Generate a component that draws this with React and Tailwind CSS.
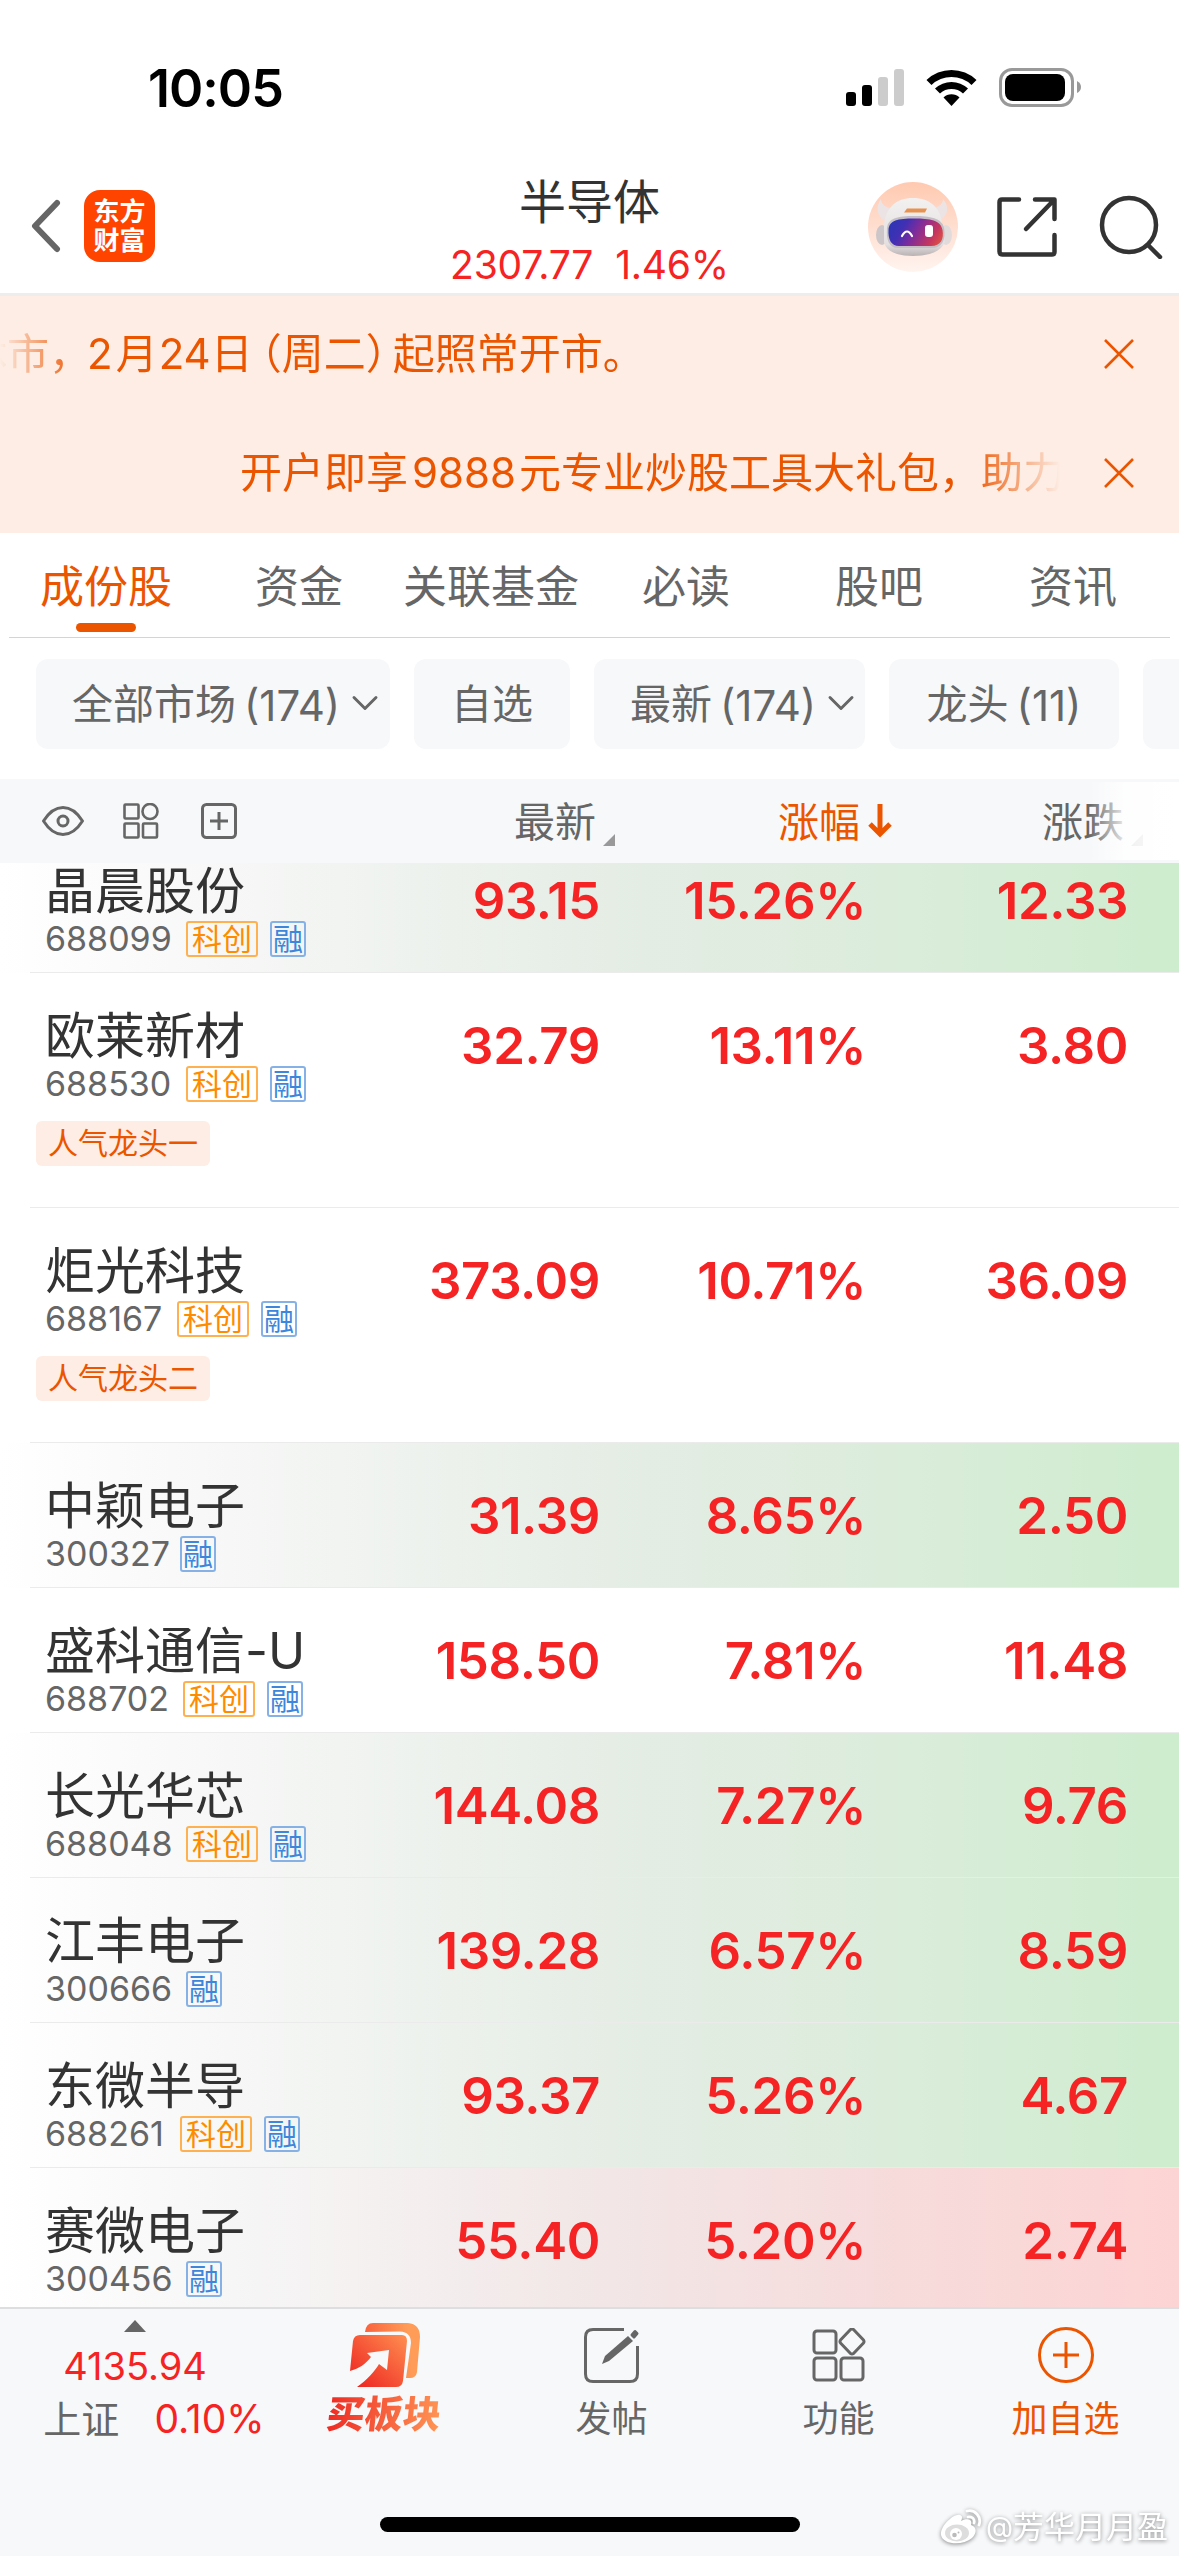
import { ChevronDown } from 'lucide-react'

const tabs = [
  { label: '成份股', space: 'ml-[40px]', active: true },
  { label: '资金', space: 'ml-[83px]' },
  { label: '关联基金', space: 'ml-[60px]' },
  { label: '必读', space: 'ml-[63px]' },
  { label: '股吧', space: 'ml-[105px]' },
  { label: '资讯', space: 'ml-[106px]' },
]

const chips = [
  { label: '全部市场', count: '(174)', arrow: true, width: 'w-[354px]' },
  { label: '自选', width: 'w-[156px]' },
  { label: '最新', count: '(174)', arrow: true, width: 'w-[271px]' },
  { label: '龙头', count: '(11)', width: 'w-[230px]' },
  { label: '', width: 'w-[60px]' },
]

const stocks = [
  { name: '晶晨股份', code: '688099', kc: true, price: '93.15', pct: '15.26%', diff: '12.33', tone: 'green', codeWidth: 'w-[141px]' },
  { name: '欧莱新材', code: '688530', kc: true, price: '32.79', pct: '13.11%', diff: '3.80', tag: '人气龙头一', codeWidth: 'w-[141px]' },
  { name: '炬光科技', code: '688167', kc: true, price: '373.09', pct: '10.71%', diff: '36.09', tag: '人气龙头二', codeWidth: 'w-[132px]' },
  { name: '中颖电子', code: '300327', price: '31.39', pct: '8.65%', diff: '2.50', tone: 'green', codeWidth: 'w-[135px]' },
  { name: '盛科通信-U', code: '688702', kc: true, price: '158.50', pct: '7.81%', diff: '11.48', codeWidth: 'w-[138px]' },
  { name: '长光华芯', code: '688048', kc: true, price: '144.08', pct: '7.27%', diff: '9.76', tone: 'green', codeWidth: 'w-[141px]' },
  { name: '江丰电子', code: '300666', price: '139.28', pct: '6.57%', diff: '8.59', tone: 'green', codeWidth: 'w-[141px]' },
  { name: '东微半导', code: '688261', kc: true, price: '93.37', pct: '5.26%', diff: '4.67', tone: 'green', codeWidth: 'w-[135px]' },
  { name: '赛微电子', code: '300456', price: '55.40', pct: '5.20%', diff: '2.74', tone: 'red', codeWidth: 'w-[141px]' },
]

const rowTones = {
  green: 'bg-[linear-gradient(90deg,#ffffff_0%,#f5f6f5_22%,#e5ede5_52%,#dcecdc_74%,#ceecce_100%)]',
  red: 'bg-[linear-gradient(90deg,#ffffff_0%,#f6f5f5_22%,#f2e6e6_52%,#f7dbdb_76%,#fdd4d4_100%)]',
}

const StatusBar = () => (
  <div className="flex h-[150px] items-start justify-between pt-[62px] pl-[148px] pr-[97px]">
    <div className="text-[52px] leading-[53px] font-semibold tracking-[-1px] text-black">10:05</div>
    <div className="flex items-center pt-[5px]">
      <svg width="58" height="40" viewBox="0 0 58 40">
        <rect x="0" y="25" width="10" height="14" rx="3" />
        <rect x="16" y="18" width="10" height="21" rx="3" />
        <rect x="32" y="10" width="10" height="29" rx="3" fill="#ccc" />
        <rect x="48" y="2" width="10" height="37" rx="3" fill="#ccc" />
      </svg>
      <svg className="ml-[22px]" width="51" height="40" viewBox="0 0 51 40">
        <path d="M0.5 13 A36 36 0 0 1 50.5 13 L45.5 18 A29 29 0 0 0 5.5 18 Z" />
        <path d="M9 21.5 A24 24 0 0 1 42 21.5 L37 26.5 A17 17 0 0 0 14 26.5 Z" />
        <path d="M17.5 30.5 A11.5 11.5 0 0 1 33.5 30.5 L25.5 39 Z" />
      </svg>
      <svg className="ml-[22px]" width="83" height="40" viewBox="0 0 83 40">
        <rect x="1.5" y="2.5" width="72" height="36" rx="11.5" fill="none" stroke="#999" strokeWidth="3" />
        <rect x="6" y="7" width="60" height="27" rx="8" />
        <path d="M78 14 Q82 16 82 20 Q82 24 78 26 Z" fill="#999" />
      </svg>
    </div>
  </div>
)

const Robot = () => (
  <svg width="90" height="90" viewBox="0 0 90 90">
    <defs>
      <linearGradient id="robotBg" x1="0" y1="0" x2="0" y2="1">
        <stop offset="0" stopColor="#ffc9b0" />
        <stop offset="1" stopColor="#fff4f0" />
      </linearGradient>
      <linearGradient id="visor" x1="0" y1="0.3" x2="1" y2="0.6">
        <stop offset="0" stopColor="#2d35b4" />
        <stop offset="0.25" stopColor="#4030b4" />
        <stop offset="0.5" stopColor="#7d2c9c" />
        <stop offset="0.85" stopColor="#c5365f" />
        <stop offset="1" stopColor="#d94a4a" />
      </linearGradient>
      <linearGradient id="helmet" x1="0" y1="0" x2="0" y2="1">
        <stop offset="0" stopColor="#f3f0f0" />
        <stop offset="0.8" stopColor="#e4e0e1" />
        <stop offset="1" stopColor="#b9b2b4" />
      </linearGradient>
    </defs>
    <circle cx="45" cy="45" r="45" fill="url(#robotBg)" />
    <path d="M13 17 C8 24 8 33 16 38 L24 27 C17 25 13 22 13 17Z" fill="#ece4e4" />
    <path d="M75 17 C81 24 81 33 72 38 L64 27 C71 25 75 22 75 17Z" fill="#ece4e4" />
    <ellipse cx="14" cy="53" rx="6" ry="10" fill="#cdc6c8" />
    <ellipse cx="78" cy="53" rx="6" ry="10" fill="#e2dbdc" />
    <path d="M16 44 C17 26 28 16 45 16 C62 16 73 26 74 42 L77 60 C73 69 62 74 45 74 C28 74 19 69 16 61 Z" fill="url(#helmet)" />
    <path d="M19 46 C20 36 30 34 46 34 C62 34 74 36 76 46 C78 58 74 66 64 66 H30 C21 66 18 58 19 46 Z" fill="#c5bfc3" />
    <path d="M20.5 48 C21 38 30 36.5 46 36.5 C62 36.5 73 38 74.5 48 C76 57 73 64 63 64 H31 C23 64 20 57 20.5 48 Z" fill="url(#visor)" />
    <path d="M36 30.5 h21 l2 -4 h-20 Z" fill="#e8924f" />
    <path d="M34 54 Q39 45 44 54" fill="none" stroke="#fff" strokeWidth="2.2" strokeLinecap="round" />
    <rect x="57" y="43" width="8" height="12" rx="3" fill="#fff" />
  </svg>
)

const NavBar = () => (
  <div className="grid h-[146px] grid-cols-[1fr_300px_1fr] border-b-[3px] border-[#ededed]">
    <div className="flex items-center pt-[9px] pl-[31px]">
      <svg width="30" height="54" viewBox="0 0 30 54" fill="none" stroke="#666" strokeWidth="6" strokeLinecap="round" strokeLinejoin="round">
        <path d="M26 4 L4 27 L26 50" />
      </svg>
      <div className="ml-[23px] flex h-[72px] w-[71px] flex-col items-center justify-center rounded-[16px] bg-[#ff4400] text-[26px] leading-[29px] font-bold text-white">
        <div>东方</div>
        <div>财富</div>
      </div>
    </div>
    <div className="pt-[28px] text-center whitespace-nowrap">
      <div className="text-[47px] leading-[48px] text-[#333]">半导体</div>
      <div className="mt-[19px] text-[39px] leading-[40px] tracking-[-0.2px] text-[#f52323]">
        2307.77<span className="ml-[22px]">1.46%</span>
      </div>
    </div>
    <div className="flex items-center justify-end pt-[10px] pr-[16px]">
      <Robot />
      <svg className="ml-[38px]" width="62" height="62" viewBox="0 0 62 62" fill="none" stroke="#333" strokeWidth="4.5" strokeLinecap="round" strokeLinejoin="round">
        <path d="M23 3.5 H6 Q3.5 3.5 3.5 6 V55.5 Q3.5 58.5 6.5 58.5 H56 Q58.5 58.5 58.5 56 V39" />
        <path d="M39 3.5 H58.5 V23 M58 4 L30 33" />
      </svg>
      <svg className="ml-[41px]" width="64" height="64" viewBox="0 0 64 64" fill="none" stroke="#333" strokeWidth="4.5" strokeLinecap="round">
        <circle cx="30" cy="30" r="27" />
        <path d="M49 50 L61 62" />
      </svg>
    </div>
  </div>
)

const CloseIcon = () => (
  <svg className="ml-auto mr-[45px]" width="30" height="30" viewBox="0 0 30 30" fill="none" stroke="#ec5500" strokeWidth="2.6">
    <path d="M1 1 L29 29 M29 1 L1 29" />
  </svg>
)

const Notices = () => (
  <div className="bg-[#fdede4] text-[42px] leading-[50px] whitespace-nowrap text-[#ec5500]">
    <div className="flex h-[115px] items-center">
      <div className="w-[1056px] overflow-hidden [mask-image:linear-gradient(90deg,transparent_0,#000_80px)]">
        <div className="-ml-[35px] flex">
          <span>休市，</span>
          <span className="ml-[-4px]">2</span>
          <span className="ml-[3px]">月</span>
          <span className="ml-[1px]">24</span>
          <span>日</span>
          <span className="ml-[8px] [font-feature-settings:'halt']">（</span>
          <span>周二</span>
          <span className="[font-feature-settings:'halt']">）</span>
          <span className="ml-[6px]">起照常开市。</span>
        </div>
      </div>
      <CloseIcon />
    </div>
    <div className="flex h-[122px] items-center pt-[2px]">
      <div className="w-[1060px] overflow-hidden pl-[240px] [mask-image:linear-gradient(90deg,#000_970px,transparent_1060px)]">
        开户即享<span className="mr-[3px] ml-[4px]">9888</span>元专业炒股工具大礼包，助力
      </div>
      <CloseIcon />
    </div>
  </div>
)

const Tabs = () => (
  <div className="px-[9px]">
    <div className="-ml-[9px] flex h-[104px] pt-[29px] text-[44px] leading-[50px] whitespace-nowrap text-[#666]">
      {tabs.map((tab) => (
        <div key={tab.label} className={`${tab.space} ${tab.active ? 'text-[#ec5500]' : ''} flex flex-col items-center`}>
          {tab.label}
          {tab.active && <div className="mt-[11px] h-[9px] w-[60px] rounded-full bg-[#ec5500]" />}
        </div>
      ))}
    </div>
    <div className="h-px bg-[#d4d4d4]" />
  </div>
)

const Filters = () => (
  <div className="flex gap-[24px] overflow-hidden pt-[21px] pb-[30px] pl-[36px] text-[41px] whitespace-nowrap text-[#666]">
    {chips.map((chip, i) => (
      <div key={i} className={`${chip.width} ${chip.arrow ? 'pl-[36px]' : 'justify-center'} flex h-[90px] shrink-0 items-center rounded-[12px] bg-[#f7f8fa] pt-[2px]`}>
        {chip.label}
        {chip.count && <span className="ml-[8px] text-[42px]">{chip.count}</span>}
        {chip.arrow && <ChevronDown className="-mt-[4px] ml-[3px] h-[44px] w-[44px]" strokeWidth={1.6} />}
      </div>
    ))}
  </div>
)

const Corner = ({ className }) => (
  <svg className={className} width="12" height="12" viewBox="0 0 12 12">
    <path d="M12 0 V12 H0 Z" fill="#999" />
  </svg>
)

const TableHead = () => (
  <div className="relative z-10 grid h-[84px] grid-cols-[514px_264px_264px_1fr] items-center bg-[#f7f8fa] text-[41px] leading-[50px] whitespace-nowrap text-[#666]">
    <div className="flex items-center pl-[41px]">
      <svg width="44" height="36" viewBox="0 0 44 36" fill="none" stroke="#666" strokeWidth="3">
        <path d="M2.5 18 Q11 4.5 22 4.5 Q33 4.5 41.5 18 Q33 31.5 22 31.5 Q11 31.5 2.5 18Z" strokeLinejoin="round" />
        <circle cx="22" cy="18" r="5" />
      </svg>
      <svg className="ml-[38px]" width="36" height="36" viewBox="0 0 36 36" fill="none" stroke="#666" strokeWidth="2.6">
        <rect x="1.5" y="1.5" width="14" height="14" rx="1" />
        <circle cx="27" cy="8.5" r="7.5" />
        <rect x="1.5" y="20.5" width="14" height="14" rx="1" />
        <rect x="20" y="20.5" width="14" height="14" rx="1" />
      </svg>
      <svg className="ml-[42px]" width="36" height="36" viewBox="0 0 36 36" fill="none" stroke="#666" strokeWidth="3">
        <rect x="1.5" y="1.5" width="33" height="33" rx="4" />
        <path d="M9 18 H27 M18 9 V27" />
      </svg>
    </div>
    <div className="flex items-center pt-px">
      最新
      <Corner className="ml-[7px] mt-[36px]" />
    </div>
    <div className="flex items-center pt-px text-[#ec5500]">
      涨幅
      <svg className="-mt-[2px] ml-[8px]" width="24" height="34" viewBox="0 0 24 34" fill="none" stroke="#ec5500" strokeWidth="5">
        <path d="M12 0 V29 M2 20 L12 30 L22 20" />
      </svg>
    </div>
    <div className="flex items-center pt-px">
      涨跌
      <Corner className="ml-[7px] mt-[36px]" />
    </div>
    <div className="absolute top-[3px] right-0 h-[78px] w-[90px] bg-[linear-gradient(90deg,rgba(255,255,255,0),rgba(255,255,255,0.85)_40%,#fff)]" />
  </div>
)

const Badge = ({ className, children }) => (
  <span className={`${className} flex h-[36px] items-center justify-center rounded-[3px] border-2 text-[30px] leading-[32px]`}>
    {children}
  </span>
)

const Quote = ({ children }) => (
  <div className="pt-[47px] text-right text-[51px] leading-[52px] font-semibold tracking-[-0.4px] text-[#f52323]">{children}</div>
)

const StockRow = ({ stock }) => (
  <div className={`${stock.tag ? 'h-[235px]' : 'h-[145px]'} ${rowTones[stock.tone] || 'bg-white'} flex flex-col justify-between`}>
    <div className="grid grid-cols-[360px_240px_266px_262px] whitespace-nowrap">
      <div className="pt-[37px] pl-[45px]">
        <div className="text-[50px] leading-[52px] text-[#333]">{stock.name}</div>
        <div className="mt-[4px] flex h-[36px] items-center">
          <span className={`${stock.codeWidth} text-[34px] leading-[36px] text-[#666]`}>{stock.code}</span>
          {stock.kc && <Badge className="mr-[12px] w-[72px] border-[#ffb152] text-[#ff8c00]">科创</Badge>}
          <Badge className="w-[36px] border-[#85b1e6] text-[#3c87dc]">融</Badge>
        </div>
        {stock.tag && (
          <div className="-ml-[9px] mt-[19px] flex h-[45px] w-[174px] items-center justify-center rounded-[6px] bg-[#fdede4] text-[30px] text-[#ec5500]">
            {stock.tag}
          </div>
        )}
      </div>
      <Quote>{stock.price}</Quote>
      <Quote>{stock.pct}</Quote>
      <Quote>{stock.diff}</Quote>
    </div>
    <div className="ml-[30px] h-px shrink-0 bg-[#ebebeb]" />
  </div>
)

const BottomBar = () => (
  <div className="relative z-10 h-[249px] border-t-2 border-[#dcdee0] bg-[#f7f8fa] text-[36px] leading-[40px] whitespace-nowrap text-[#666]">
    <div className="flex">
      <div className="flex w-[270px] flex-col items-center pt-[11px]">
        <svg width="22" height="12" viewBox="0 0 22 12">
          <path d="M11 0 L22 12 H0 Z" fill="#666" />
        </svg>
        <div className="mt-[14px] text-[38px] text-[#f52323]">4135.94</div>
        <div className="mt-[13px] flex pl-[38px] text-[38px]">
          上证<span className="ml-[35px] text-[39px] text-[#f52323]">0.10%</span>
        </div>
      </div>
      <div className="flex w-[229px] flex-col items-center pt-[14px]">
        <svg width="72" height="66" viewBox="0 0 72 66">
          <defs>
            <linearGradient id="buyFront" x1="0" y1="1" x2="1" y2="0">
              <stop offset="0.1" stopColor="#ee2a24" />
              <stop offset="1" stopColor="#ff8f50" />
            </linearGradient>
            <linearGradient id="buyBack" x1="0" y1="0.4" x2="1" y2="0.3">
              <stop offset="0" stopColor="#f9603c" />
              <stop offset="0.8" stopColor="#ff9c57" />
            </linearGradient>
          </defs>
          <path d="M16 9 Q17 0 24 0 H59 Q71 1 71 14 L68 49 Q67 55 61 55 H57 L62 20 Q62 9 51 8.5 Z" fill="url(#buyBack)" />
          <path d="M4 18 Q5 12 11 12 H53 Q58 12 58 18 L54 58 Q53 64 47 64 H8 C18 57 26 48 30 41 L38 47 L40 27 L18 30 L22 34 C17 41 9 46 1 48 Z" fill="url(#buyFront)" />
        </svg>
        <div className="-skew-x-6 bg-[linear-gradient(90deg,#ee2a24,#ff9555)] bg-clip-text text-[38px] leading-[50px] font-black text-transparent">买板块</div>
      </div>
      <div className="flex w-[225px] flex-col items-center pt-[19px]">
        <svg width="56" height="56" viewBox="0 0 56 56" fill="none" stroke="#666" strokeWidth="3">
          <path d="M40 1.5 H9 Q1.5 1.5 1.5 9 V46 Q1.5 53.5 9 53.5 H46 Q53.5 53.5 53.5 46 V18" />
          <path d="M18 36 L21 28 L44 8 L49 13 L25 33 Z" fill="#666" stroke="none" />
          <path d="M48 7 L51 3.5 L53 5.5 L50 9 Z" fill="#666" strokeWidth="3" strokeLinejoin="round" />
        </svg>
        <div className="mt-[15px]">发帖</div>
      </div>
      <div className="flex w-[229px] flex-col items-center pt-[19px]">
        <svg width="54" height="54" viewBox="0 0 54 54" fill="none" stroke="#666" strokeWidth="3" strokeLinejoin="round">
          <rect x="2" y="3" width="22" height="22" rx="3" />
          <path d="M38.5 1.5 Q40 0.5 41.5 1.5 L51.5 12 Q52.5 13.5 51.5 15 L41.5 25.5 Q40 26.5 38.5 25.5 L28.5 15 Q27.5 13.5 28.5 12 Z" />
          <rect x="2" y="30" width="22" height="22" rx="3" />
          <rect x="29" y="30" width="22" height="22" rx="3" />
        </svg>
        <div className="mt-[17px]">功能</div>
      </div>
      <div className="flex w-[225px] flex-col items-center pt-[18px] text-[#ec5500]">
        <svg width="56" height="56" viewBox="0 0 56 56" fill="none" stroke="#ec5500" strokeWidth="3">
          <circle cx="28" cy="28" r="26.5" />
          <path d="M15 28 H41 M28 15 V41" />
        </svg>
        <div className="mt-[16px]">加自选</div>
      </div>
    </div>
    <div className="absolute top-[208px] left-[380px] h-[15px] w-[420px] rounded-full bg-black" />
    <div className="absolute top-[198px] right-[11px] flex items-center text-[31px] leading-[40px] text-white [filter:drop-shadow(0_1px_2px_rgba(0,0,0,0.45))]">
      <svg className="mr-[3px]" width="43" height="36" viewBox="0 0 43 36" fill="none">
        <path d="M1 26 C0 17 14 4 20 6 C23 7 22 10 21 12 C27 9 33 10 31 16 C37 18 37 24 32 29 C23 37 3 36 1 26Z" fill="#fff" />
        <ellipse cx="17" cy="24" rx="12" ry="8.5" fill="#ddd" />
        <circle cx="16" cy="25" r="6" fill="#fff" />
        <circle cx="14.5" cy="26" r="2.3" fill="#bbb" />
        <circle cx="18.5" cy="23.5" r="1" fill="#bbb" />
        <path d="M27 2 C35 0 42 8 39 16 M28 8 C32 7 35 10 34 14" stroke="#fff" strokeWidth="2.8" strokeLinecap="round" />
      </svg>
      <span className="text-[28px]">@</span>芳华月月盈
    </div>
  </div>
)

const App = () => {
  return (
    <div className="flex h-[2556px] w-[1179px] flex-col overflow-hidden bg-white font-['Inter','Noto_Sans_CJK_SC',sans-serif]">
      <StatusBar />
      <NavBar />
      <Notices />
      <Tabs />
      <Filters />
      <TableHead />
      {/* list is scrolled, so the first row slides under the table head */}
      <div className="h-[1444px] overflow-hidden">
        <div className="-mt-[35px]">
          {stocks.map((stock) => (
            <StockRow key={stock.code} stock={stock} />
          ))}
        </div>
      </div>
      <BottomBar />
    </div>
  )
}

export default App
